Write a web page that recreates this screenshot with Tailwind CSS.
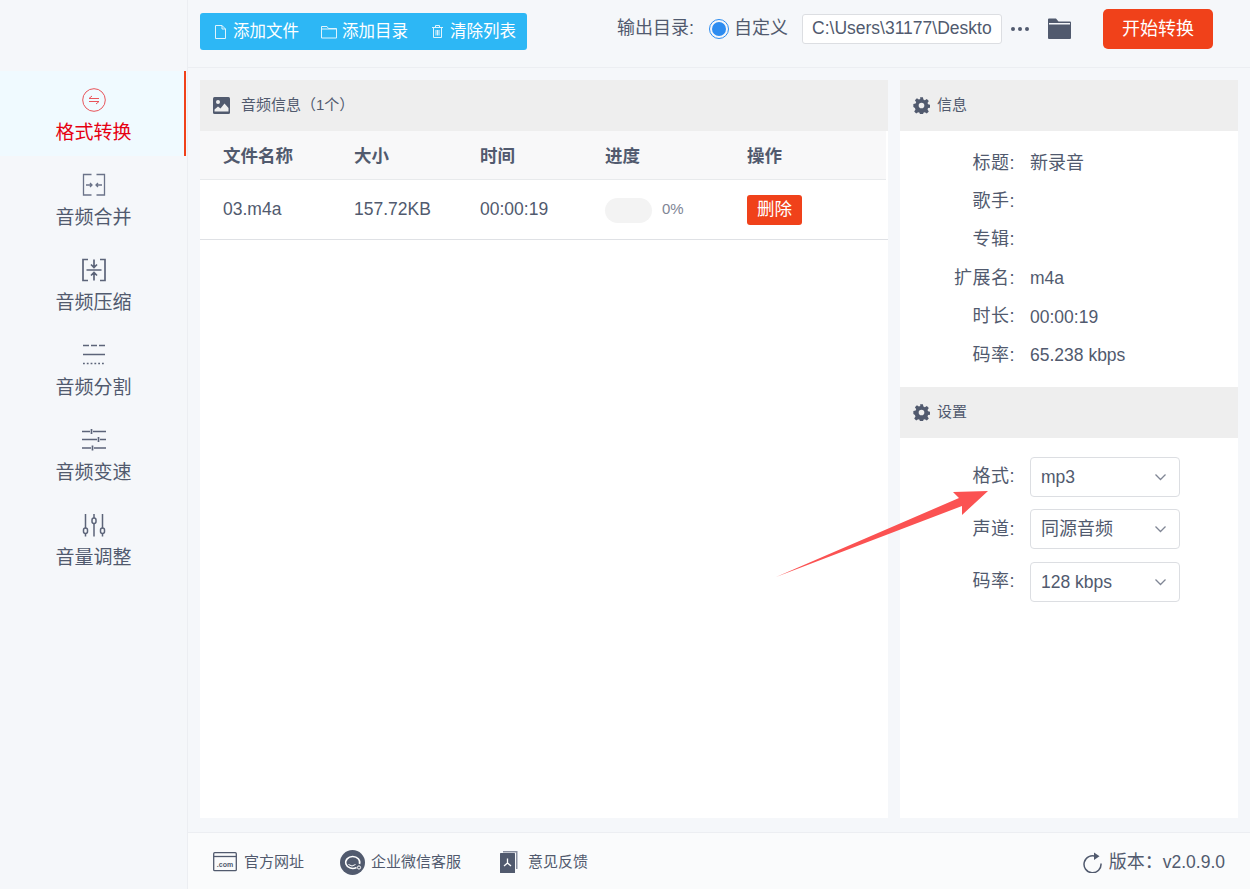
<!doctype html>
<html lang="zh-CN">
<head>
<meta charset="UTF-8">
<script src="https://cdn.jsdelivr.net/npm/@tailwindcss/browser@4"></script>
<title>音频格式转换</title>
</head>
<body class="relative w-[1250px] h-[889px] overflow-hidden bg-[#f5f7fa] text-[#515a6e] font-['Liberation_Sans','Noto_Sans_CJK_SC',sans-serif]">
<div class="flex h-full">

	<!-- sidebar -->
	<aside class="w-[188px] shrink-0 border-r border-[#eceef2] pt-[71px]">
		<a class="flex flex-col items-center h-[85px] pt-[17px] pl-[3px] bg-[#f0faff] border-r-2 border-[#f0411a] mr-[1px] text-[#e60012]">
			<svg class="w-[24px] h-[24px]" viewBox="0 0 24 24" fill="none" stroke="#e8545a" stroke-width="1"><circle cx="12" cy="12" r="11.3"/><path d="M7 10.500h10M7 10.500l3-2.500M17 13.500H7M17 13.500l-3 2.500"/></svg>
			<span class="text-[19px] leading-[26px] mt-[8px]">格式转换</span>
		</a>
		<a class="flex flex-col items-center h-[85px] pt-[17px]">
			<svg class="w-[24px] h-[24px]" viewBox="0 0 24 24" fill="none" stroke="#6b7389" stroke-width="1.300"><path d="M9.500 1.500H1.500v20.500h8M14.500 1.500h8v20.500h-8M4 12h6M8 10l2 2-2 2M20 12h-6M16 10l-2 2 2 2"/></svg>
			<span class="text-[19px] leading-[26px] mt-[8px]">音频合并</span>
		</a>
		<a class="flex flex-col items-center h-[85px] pt-[17px]">
			<svg class="w-[24px] h-[24px]" viewBox="0 0 24 24" fill="none" stroke="#5c6479" stroke-width="1.700"><path d="M6 1.500H1v21h5M18 1.500h5v21h-5M4.500 12h15M12 1.500v8M9 6.500l3 3 3-3M12 22.500v-8M9 17.500l3-3 3 3"/></svg>
			<span class="text-[19px] leading-[26px] mt-[8px]">音频压缩</span>
		</a>
		<a class="flex flex-col items-center h-[85px] pt-[17px]">
			<svg class="w-[24px] h-[24px]" viewBox="0 0 24 24" fill="none" stroke="#5c6479"><path stroke-width="1.500" d="M1 2.500h6M9 2.500h6M17 2.500h6M1 11.500h22"/><path stroke-width="1.500" stroke-dasharray="1.800 2" d="M1 20.500h22"/></svg>
			<span class="text-[19px] leading-[26px] mt-[8px]">音频分割</span>
		</a>
		<a class="flex flex-col items-center h-[85px] pt-[17px]">
			<svg class="w-[24px] h-[24px]" viewBox="0 0 24 24" fill="none" stroke="#5c6479" stroke-width="1.700"><path d="M0 3.500h8M11 3.500h13M9.500 1v5M0 11.500h15M18 11.500h6M16.500 9v5M0 20h9M12 20h12M10.500 17.500v5"/></svg>
			<span class="text-[19px] leading-[26px] mt-[8px]">音频变速</span>
		</a>
		<a class="flex flex-col items-center h-[85px] pt-[17px]">
			<svg class="w-[24px] h-[24px]" viewBox="0 0 24 24" fill="none" stroke="#5c6479" stroke-width="1.500"><path d="M3.500 1v14.500M3.500 20v3.500M12 1v4M12 10v13.500M20.500 1v14.500M20.500 20v3.500"/><rect x="1.500" y="15" width="4" height="5.500" rx="2"/><rect x="10" y="5" width="4" height="5.500" rx="2"/><rect x="18.500" y="15" width="4" height="5.500" rx="2"/></svg>
			<span class="text-[19px] leading-[26px] mt-[8px]">音量调整</span>
		</a>
	</aside>

	<div class="flex-1 flex flex-col min-w-0">
		<!-- toolbar -->
		<header class="h-[68px] shrink-0 border-b border-[#eceef2] flex items-start pl-[12px]">
			<div class="mt-[13px] w-[327px] h-[37px] rounded-[3px] bg-[#2db7f5] flex items-center text-white text-[16.500px] pl-[15px]">
				<svg class="w-[11px] h-[14px]" viewBox="0 0 11 14" fill="none" stroke="#dff4fd" stroke-width="1"><path d="M.500.500h6.500l3.500 3.500v9.500h-10zM7 .500V4h3.500"/></svg>
				<span class="ml-[7px]">添加文件</span>
				<svg class="ml-[22px] w-[16px] h-[14px]" viewBox="0 0 16 14" fill="none" stroke="#dff4fd" stroke-width="1"><path d="M.500 13V1.500h5.500l1.500 2H15.500V13zM.500 4h15"/></svg>
				<span class="ml-[5px]">添加目录</span>
				<svg class="ml-[24px] w-[11px] h-[13px]" viewBox="0 0 11 13" fill="none" stroke="#dff4fd" stroke-width="1"><path d="M0 2.500h11M3.500 2.500V.500h4v2M1.500 3v9.500h8V3M4 5v5.500M5.500 5v5.500M7 5v5.500"/></svg>
				<span class="ml-[7px]">清除列表</span>
			</div>
			<div class="ml-[90px] mt-[14px] h-[29px] flex items-center text-[18px] whitespace-nowrap">
				<span>输出目录:</span>
				<span class="ml-[15px] w-[20px] h-[20px] rounded-full border border-[#2d8cf0] flex items-center justify-center"><span class="w-[14px] h-[14px] rounded-full bg-[#2d8cf0]"></span></span>
				<span class="ml-[5px]">自定义</span>
				<span class="ml-[14px] w-[200px] h-[30px] rounded-[3px] border border-[#dcdee2] bg-white pl-[9px] leading-[27px] text-[17.500px] overflow-hidden">C:\Users\31177\Deskto</span>
				<span class="ml-[9px] flex gap-[3px]"><i class="w-[4px] h-[4px] rounded-full bg-[#515a6e]"></i><i class="w-[4px] h-[4px] rounded-full bg-[#515a6e]"></i><i class="w-[4px] h-[4px] rounded-full bg-[#515a6e]"></i></span>
				<svg class="ml-[18px] w-[25px] h-[22px]" viewBox="0 0 25 22" fill="#515a6e"><path d="M1 1.500q0-1 1-1h7l2.500 3H23q1 0 1 1V20q0 1-1 1H2q-1 0-1-1zM2 5v1.500h21V5z" fill-rule="evenodd"/></svg>
			</div>
			<button class="ml-[31px] mt-[9px] w-[110px] h-[40px] rounded-[5px] bg-[#f0411a] text-white text-[18px]">开始转换</button>
		</header>

		<!-- panels -->
		<main class="flex-1 flex gap-[12px] pl-[12px] pt-[12px] pr-[12px] pb-[14px] min-h-0">
			<section class="w-[688px] bg-white">
				<div class="h-[51px] bg-[#eeeeee] flex items-center pl-[13px] text-[15px]">
					<svg class="w-[17px] h-[17px]" viewBox="0 0 17 17"><rect width="17" height="17" rx="1.500" fill="#515a6e"/><circle cx="5" cy="5" r="2" fill="#eee"/><path d="M1.500 14.500v-2l3.500-3 2.500 2 4-5 4 4.500v3.500z" fill="#eee"/></svg>
					<span class="ml-[11px]">音频信息&#xFF08;1个&#xFF09;</span>
				</div>
				<div class="h-[49px] pt-[2px] bg-[#f8f8f9] border-b border-[#e8eaec] flex items-center text-[17.500px] font-bold mr-[2px]">
					<span class="w-[154px] pl-[23px]">文件名称</span>
					<span class="w-[126px]">大小</span>
					<span class="w-[125px]">时间</span>
					<span class="w-[142px]">进度</span>
					<span>操作</span>
				</div>
				<div class="h-[60px] border-b border-[#dfe1e5] flex items-center text-[17.500px]">
					<span class="w-[154px] pl-[23px]">03.m4a</span>
					<span class="w-[126px]">157.72KB</span>
					<span class="w-[125px]">00:00:19</span>
					<span class="w-[142px] flex items-center">
						<span class="w-[47px] h-[25px] mt-[1px] rounded-full bg-[#f3f3f3]"></span>
						<span class="ml-[10px] text-[15px] text-[#808695]">0%</span>
					</span>
					<button class="w-[55px] h-[30px] rounded-[3px] bg-[#f0411a] text-white text-[17.500px]">删除</button>
				</div>
			</section>

			<section class="w-[338px] bg-white">
				<div class="h-[51px] bg-[#eeeeee] flex items-center pl-[13px] text-[15px]">
					<svg class="w-[17px] h-[17px]" viewBox="0 0 24 24" fill="#515a6e"><path fill-rule="evenodd" d="M10 .500h4l.700 3.200 2 .800 2.800-1.800 2.800 2.800-1.800 2.800.800 2 3.200.700v4l-3.200.700-.800 2 1.800 2.800-2.800 2.800-2.800-1.800-2 .800-.700 3.200h-4l-.700-3.200-2-.800-2.800 1.800-2.800-2.800 1.800-2.800-.800-2L.500 14v-4l3.200-.700.800-2L2.700 4.500l2.800-2.800 2.800 1.800 2-.800zM12 8a4 4 0 1 0 0 8 4 4 0 0 0 0-8z"/></svg>
					<span class="ml-[7px]">信息</span>
				</div>
				<dl class="h-[256px] pt-[13px] text-[18px]">
					<div class="flex h-[38.400px] items-center"><dt class="w-[115px] text-right tracking-[.5px]">标题:</dt><dd class="ml-[15px]">新录音</dd></div>
					<div class="flex h-[38.400px] items-center"><dt class="w-[115px] text-right tracking-[.5px]">歌手:</dt><dd class="ml-[15px]"></dd></div>
					<div class="flex h-[38.400px] items-center"><dt class="w-[115px] text-right tracking-[.5px]">专辑:</dt><dd class="ml-[15px]"></dd></div>
					<div class="flex h-[38.400px] items-center"><dt class="w-[115px] text-right tracking-[.5px]">扩展名:</dt><dd class="ml-[15px] text-[17.500px]">m4a</dd></div>
					<div class="flex h-[38.400px] items-center"><dt class="w-[115px] text-right tracking-[.5px]">时长:</dt><dd class="ml-[15px] text-[17.500px]">00:00:19</dd></div>
					<div class="flex h-[38.400px] items-center"><dt class="w-[115px] text-right tracking-[.5px]">码率:</dt><dd class="ml-[15px] text-[17.500px]">65.238 kbps</dd></div>
				</dl>
				<div class="h-[51px] bg-[#eeeeee] flex items-center pl-[13px] text-[15px]">
					<svg class="w-[17px] h-[17px]" viewBox="0 0 24 24" fill="#515a6e"><path fill-rule="evenodd" d="M10 .500h4l.700 3.200 2 .800 2.800-1.800 2.800 2.800-1.800 2.800.800 2 3.200.700v4l-3.200.700-.800 2 1.800 2.800-2.800 2.800-2.800-1.800-2 .800-.700 3.200h-4l-.700-3.200-2-.800-2.800 1.800-2.800-2.800 1.800-2.800-.800-2L.500 14v-4l3.200-.700.800-2L2.700 4.500l2.800-2.800 2.800 1.800 2-.800zM12 8a4 4 0 1 0 0 8 4 4 0 0 0 0-8z"/></svg>
					<span class="ml-[7px]">设置</span>
				</div>
				<div class="pt-[19px] flex flex-col gap-[12px] text-[18px]">
					<div class="flex items-center"><span class="w-[115px] pb-[2px] text-right tracking-[.5px]">格式:</span>
						<div class="ml-[15px] w-[150px] h-[40px] rounded-[4px] border border-[#dcdee2] flex items-center justify-between pl-[10px] pr-[12px]"><span class="text-[17.500px]">mp3</span><svg class="w-[13px] h-[8px]" viewBox="0 0 13 8" fill="none" stroke="#808695" stroke-width="1.300"><path d="M1.500 1.500l5 5 5-5"/></svg></div></div>
					<div class="flex items-center"><span class="w-[115px] text-right tracking-[.5px]">声道:</span>
						<div class="ml-[15px] w-[150px] h-[40px] rounded-[4px] border border-[#dcdee2] flex items-center justify-between pl-[10px] pr-[12px]"><span>同源音频</span><svg class="w-[13px] h-[8px]" viewBox="0 0 13 8" fill="none" stroke="#808695" stroke-width="1.300"><path d="M1.500 1.500l5 5 5-5"/></svg></div></div>
					<div class="flex items-center mt-[1px]"><span class="w-[115px] pb-[2px] text-right tracking-[.5px]">码率:</span>
						<div class="ml-[15px] w-[150px] h-[40px] rounded-[4px] border border-[#dcdee2] flex items-center justify-between pl-[10px] pr-[12px]"><span class="text-[17.500px]">128 kbps</span><svg class="w-[13px] h-[8px]" viewBox="0 0 13 8" fill="none" stroke="#808695" stroke-width="1.300"><path d="M1.500 1.500l5 5 5-5"/></svg></div></div>
				</div>
			</section>
		</main>

		<!-- footer -->
		<footer class="h-[57px] shrink-0 pt-[2px] bg-[#fafbfc] border-t border-[#eceef2] flex items-center pl-[25px] pr-[25px] text-[15px]">
			<svg class="w-[24px] h-[20px]" viewBox="0 0 24 20" fill="none" stroke="#515a6e" stroke-width="1.300"><rect x=".700" y=".700" width="22.600" height="18" rx="1"/><path d="M.700 4.500h22.600"/><text x="12" y="15" font-size="7" font-weight="700" text-anchor="middle" fill="#515a6e" stroke="none" font-family="Liberation Sans">.com</text></svg>
			<span class="ml-[7px]">官方网址</span>
			<svg class="ml-[36px] w-[25px] h-[25px]" viewBox="0 0 25 25"><circle cx="12.500" cy="12.500" r="12.500" fill="#515a6e"/><path d="M16.500 17.500a7 6 0 1 1 3-3.500" fill="none" stroke="#fff" stroke-width="1.600"/><path d="M8.500 14.500q3.500 3 7 0" fill="none" stroke="#fff" stroke-width="1"/><circle cx="19" cy="17.500" r="1.600" fill="none" stroke="#fff"/></svg>
			<span class="ml-[6px]">企业微信客服</span>
			<svg class="ml-[39px] w-[18px] h-[22px]" viewBox="0 0 18 22"><path d="M3 0h14.500v18H16V1.500H3z" fill="#8a90a0"/><rect y="2" width="15" height="20" rx=".500" fill="#515a6e"/><path d="M7.500 7.500v4.500M7.500 12l-3.500 3M7.500 12l3.500 3" stroke="#fff" stroke-width="1.300" fill="none"/></svg>
			<span class="ml-[10px]">意见反馈</span>
			<span class="ml-auto flex items-center text-[18px]">
				<svg class="w-[20px] h-[21px]" viewBox="0 0 20 21" fill="none" stroke="#515a6e" stroke-width="1.500"><path d="M14 4.500a8.500 8.500 0 1 0 5 7"/><path d="M12 .500l5.500 3.800L12 8z" fill="#515a6e" stroke="none"/></svg>
				<span class="ml-[7px]">版本&#xFF1A;<span class="text-[17.500px]">v2.0.9.0</span></span>
			</span>
		</footer>
	</div>
</div>

<!-- annotation arrow drawn over the screenshot -->
<svg class="absolute left-0 top-0 pointer-events-none" width="1250" height="889" viewBox="0 0 1250 889"><path d="M776 577L959 498L953 492L988 491L962 515L962 506Z" fill="#fb5252"/></svg>
</body>
</html>
